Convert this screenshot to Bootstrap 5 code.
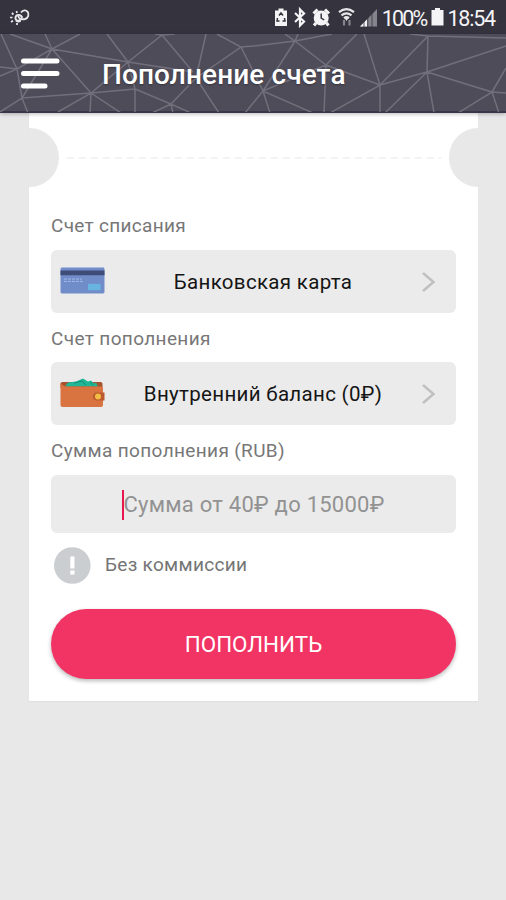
<!DOCTYPE html>
<html lang="ru">
<head>
<meta charset="utf-8">
<meta name="viewport" content="width=device-width, initial-scale=1">
<title>Пополнение счета</title>
<link href="https://cdn.jsdelivr.net/npm/bootstrap@5.3.0/dist/css/bootstrap.min.css" rel="stylesheet">
<style>
body{font-family:Roboto,"Noto Sans",sans-serif;background:#e8e8e8;height:900px;overflow:hidden;color:#111}
.status{height:34px;background:#35333e;color:#f4f4f6;font-size:21.500px;line-height:34px;padding:0 11px 0 9px}
.status .txt{white-space:nowrap;padding-top:3px;letter-spacing:-1.800px}
.status .clock{letter-spacing:-1.200px;margin-left:3px}
.sysicons{margin-right:5px}
.battery{margin-left:5px}
.appbar{height:79px;background:#4f4c59;border-bottom:2px solid #39364a;box-shadow:0 1px 4px rgba(0,0,0,.28);z-index:2}
.mesh{left:0;top:0;width:506px;height:78px}
.burger{margin-left:21px;width:39px;height:32px}
.title{font-size:28px;font-weight:500;color:#fff;margin-left:42px;padding-top:4px;line-height:32px;letter-spacing:.1px;text-shadow:0 1px 2px rgba(0,0,0,.35)}
.ticket{width:449px;height:588px;margin-left:29px;background:#fff;padding-top:15px;box-shadow:0 1px 1px rgba(0,0,0,.03)}
.notch{width:29.500px;height:59px;background:#e8e8e8}
.notch-l{border-radius:0 30px 30px 0}
.notch-r{border-radius:30px 0 0 30px}
.fields{padding:25px 22px 0}
.lbl{font-size:19px;line-height:28px;height:27px;color:#777;margin-bottom:11px;letter-spacing:.3px;white-space:nowrap}
.lbl.low{line-height:29px;letter-spacing:.36px}
.field{height:63px;background:#ebebeb;border-radius:6px;padding:0 20px 0 9px;margin-bottom:11px}
.field .val{font-size:20.500px;color:#151515;letter-spacing:.32px;white-space:nowrap;padding-top:1px}
.field .pic{margin-bottom:2px}
.field.amount{height:58px;padding:1px 20px 0;font-size:22px;color:#929292;margin:12px 0 14px;letter-spacing:.25px}
.caret{width:2px;height:30px;background:#e8174f;margin-right:-1px}
.note{height:37px;padding-left:3px;font-size:19px;color:#747474}
.note span{margin-left:14px;letter-spacing:.3px}
.pay{height:70px;margin-top:25px;background:#f13464;color:#fff;font-size:22.400px;padding-top:7px;box-shadow:0 2px 4px rgba(0,0,0,.28)}
.pay:hover{background:#f13464;color:#fff}
</style>
</head>
<body>
<div class="status d-flex align-items-center">
  <svg width="22" height="18" viewBox="0 0 22 18" fill="none" stroke="#e9e9ec" stroke-width="1.900"><path d="M7 12.500c1.500 1.200 3 1.500 4.500.5M12 4.500c2-2.500 5-2.800 6.500-.8 2 2.500.8 6.500-2.500 7.300-4 .7-6.500-.5-6.800-3"/><path d="M11.800 11.500c-1.600 1.800-4.800 1.400-5.300-.8-.5-2.300 1.500-4.200 3.700-3.700 1.400.3 2.500 1.300 3.300 2.700"/><path d="M1 9.500h2.500M2 14l2-1.300M2.800 5l1.700 1.500M7.500 3l.5 2M8 15v2" stroke-width="1.700"/></svg>
  <div class="ms-auto d-flex align-items-center">
    <svg class="sysicons" width="103" height="22" viewBox="272 6 103 22">
      <path fill="#f4f4f6" d="M276.500 8.500h5v2h3.500v15.500h-12V10.500h3.500z"/>
      <path d="M277 15.500l2-2.500 2 2.500M275.500 18l-.5 3h2.500M282.500 18l.5 3h-2.500" fill="none" stroke="#35333e" stroke-width="1.500"/>
      <path d="M293 13l9 8.500-4 4V9.500l4 4-9 8.500" fill="none" stroke="#f4f4f6" stroke-width="2.200"/>
      <circle cx="319.200" cy="18" r="7.500" fill="#f4f4f6"/>
      <path d="M311.500 13.500l4-4M323 9.500l4 4M314 23l-2 2.500M324.500 23l2 2.500" stroke="#f4f4f6" stroke-width="3"/>
      <path d="M319.200 13.500V18l3 2" fill="none" stroke="#35333e" stroke-width="1.500"/>
      <path d="M337 12.200q7.500-6 15 0M339.500 15.300q5-4 10 0M342 18.200q2.500-2 5 0" fill="none" stroke="#e6e6e8" stroke-width="2.200"/>
      <path fill="#e6e6e8" d="M342.500 18h4l-2 3z"/>
      <path d="M342 20v5.500M347.500 20v5.500" stroke="#85838c" stroke-width="2.200"/>
      <path fill="#85838c" d="M358 26.500L375 9v17.500z"/>
      <path fill="#f4f4f6" d="M358 26.500l7-7v7z"/>
      <path d="M362 20v7M365.800 15v12M370 12v15" stroke="#35333e" stroke-width=".8"/>
    </svg>
    <span class="txt">100%</span>
    <svg class="battery" width="13" height="20" viewBox="0 0 13 20"><path fill="#f4f4f6" d="M4 1h5v2h3.500v15.500H.5V3H4z"/></svg>
    <span class="txt clock">18:54</span>
  </div>
</div>
<header class="appbar position-relative d-flex align-items-center">
  <svg class="mesh position-absolute" viewBox="0 34 506 78" fill="none" stroke="#726f7c" stroke-width="1.500"><path d="M1 34L17 69L52 49L10 34M45 34L52 49L80 34M52 49L128 62L193 72M52 49L91 93M52 49L22 98M0 67L17 69L0 76M17 69L22 98L91 93L135 89M0 112L22 98L28 113M58 112L91 93L90 113M91 93L121 113M91 93L128 62L107 34M128 62L162 35L193 72M155 34L162 35L175 34M206 34L196 78M128 62L135 89V113M135 89L171 104L152 113M191 113L171 104L173 113M171 104L196 78L219 113M196 78L241 47L217 34M241 47L253 46L295 41M241 47L263 91L245 113M270 113L263 91L313 113M295 41L263 91L326 65M285 34L295 41L298 34M332 34L295 41L326 65L357 34M326 65L324 113M326 65L380 85L364 34M330 113L380 85V113M380 85L428 36L410 34M380 85L427 72L428 36L506 38M506 46L427 72L492 92L506 68M385 113L427 72L434 113M506 93L492 92L458 113M492 92L499 113"/></svg>
  <svg class="burger position-relative" viewBox="0 0 39 32" stroke="#fff" stroke-width="5" stroke-linecap="round"><path d="M2.500 4h33.500M2.500 16.500h33.500M2.500 29h21.500"/></svg>
  <h1 class="title position-relative mb-0">Пополнение счета</h1>
</header>
<main class="ticket">
  <div class="d-flex align-items-center justify-content-between">
    <div class="notch notch-l"></div>
    <svg width="374" height="2"><path d="M0 1H374" stroke="#f0f0f0" stroke-width="1.500" stroke-dasharray="7 5"/></svg>
    <div class="notch notch-r"></div>
  </div>
  <div class="fields">
    <div class="lbl">Счет списания</div>
    <div class="field d-flex align-items-center">
      <svg class="pic" width="45" height="27" viewBox="0 0 45 28" preserveAspectRatio="none"><rect x=".5" y=".5" width="44" height="27" rx="1.500" fill="#708dca"/><path fill="#3d4d78" d="M.5 3.500h44v5H.5z"/><path d="M4 12.500h18M4 15h19" stroke="#a3b8e4" stroke-dasharray="3 1"/><path fill="#68b4e0" d="M28 17.500h12.500v6.500H28z"/></svg>
      <span class="val flex-grow-1 text-center">Банковская карта</span>
      <svg width="15" height="22" viewBox="0 0 15 22"><path d="M2 2l10.500 9L2 20" fill="none" stroke="#c0c0c0" stroke-width="2.500"/></svg>
    </div>
    <div class="lbl low">Счет пополнения</div>
    <div class="field d-flex align-items-center">
      <svg class="pic" width="45" height="32" viewBox="0 0 45 32"><path fill="#a6532f" d="M2.500 5h38q2 0 2 2v4H.5V7q0-2 2-2z"/><path fill="#20b696" d="M5 9.500l3-4 8-1 7-3 5 3 3-1 3 3 2-1 2 4z"/><path d="M14 6l8-2 4 4M30 5l3 3" fill="none" stroke="#158b76"/><path fill="#d9733f" d="M.5 6q2 3 5 3.500H41q2 0 2 2V28q0 2-2 2H2.500q-2 0-2-2z"/><path fill="#bc5b30" d="M37 15.500h7.500v8H37a4 4 0 0 1 0-8z"/><circle cx="38" cy="19.500" r="3" fill="#f4bd43"/></svg>
      <span class="val flex-grow-1 text-center">Внутренний баланс (0₽)</span>
      <svg width="15" height="22" viewBox="0 0 15 22"><path d="M2 2l10.500 9L2 20" fill="none" stroke="#c0c0c0" stroke-width="2.500"/></svg>
    </div>
    <div class="lbl low">Сумма пополнения (RUB)</div>
    <div class="field amount d-flex align-items-center justify-content-center"><i class="caret"></i><span>Сумма от 40₽ до 15000₽</span></div>
    <div class="note d-flex align-items-center">
      <svg width="37" height="37" viewBox="0 0 37 37"><circle cx="18.300" cy="18.500" r="18.300" fill="#cbced1"/><path fill="#fff" d="M16.300 9.500h4.200v12h-4.200zM16.300 23.500h4.200v4h-4.200z"/></svg>
      <span>Без коммиссии</span>
    </div>
    <button type="button" class="pay btn w-100 rounded-pill border-0">ПОПОЛНИТЬ</button>
  </div>
</main>
<script src="https://cdn.jsdelivr.net/npm/bootstrap@5.3.0/dist/js/bootstrap.bundle.min.js"></script>
</body>
</html>
